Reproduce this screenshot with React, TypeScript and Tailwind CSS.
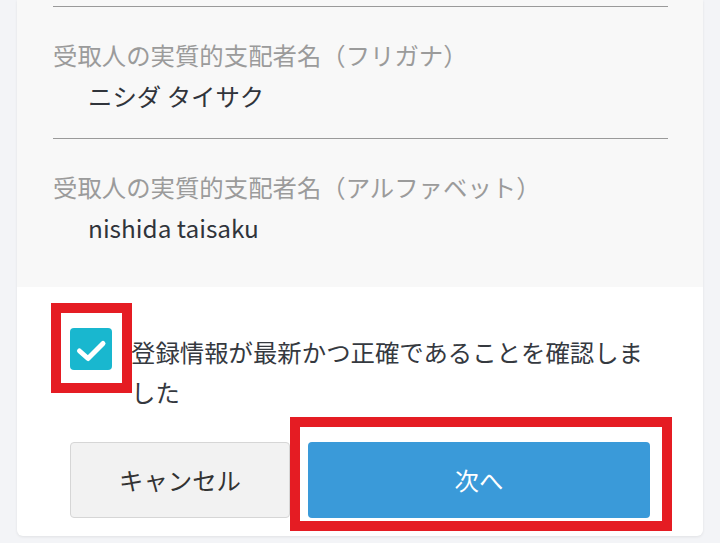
import React from "react";

const font = { fontFamily: '"Noto Sans CJK JP", "Noto Sans", sans-serif' };

function Item({ label, value, last }: { label: string; value: string; last?: boolean }) {
  return (
    <div className={`border-t border-[#9a9a9a] pt-[28px] ${last ? "pb-[38px]" : "pb-[21px]"}`}>
      <div className="text-[24.4px] leading-[40px] text-[#9b9b9b] whitespace-nowrap">{label}</div>
      <div className="pl-[35px] text-[24.4px] leading-[42px] text-[#30343b] whitespace-nowrap">{value}</div>
    </div>
  );
}

export default function App() {
  return (
    <div className="h-[543px] w-[720px] overflow-hidden bg-[#f3f4f7] px-[17px]" style={font}>
      <div className="overflow-hidden rounded-b-[6px] bg-white shadow-[0_1px_3px_rgba(0,0,0,0.08)]">
        <div className="bg-[#f8f8f8] pl-[36px] pr-[35px] pt-[6px]">
          <Item label="受取人の実質的支配者名（フリガナ）" value="ニシダ タイサク" />
          <Item label="受取人の実質的支配者名（アルファベット）" value="nishida taisaku" last />
        </div>
        <div className="px-[53px] pb-[18px] pt-[41px]">
          <div className="flex items-start gap-[19px]">
            <div className="relative h-[42px] w-[42px] shrink-0">
              <div className="h-[42px] w-[42px] rounded-[4px] bg-[#19b7cf]">
                <svg width="42" height="42" viewBox="0 0 42 42">
                  <polyline points="9.5,23 18,30.5 33,15.5" fill="none" stroke="white" strokeWidth="5" strokeLinecap="round" strokeLinejoin="round" />
                </svg>
              </div>
              <div className="pointer-events-none absolute -left-[19px] -right-[20px] -top-[25px] -bottom-[23px] border-[10px] border-[#e51c23]" />
            </div>
            <div className="mt-[4px] flex-1 text-[24.4px] leading-[40px] text-[#35393f]">
              登録情報が最新かつ正確であることを確認しました
            </div>
          </div>
          <div className="mt-[30px] flex gap-[18px]">
            <button className="flex h-[76px] w-[220px] items-center justify-center rounded-[4px] border border-[#d6d6d6] bg-[#f2f2f2] text-[24.4px] text-[#333]">
              キャンセル
            </button>
            <div className="relative flex-1">
              <button className="flex h-[76px] w-full items-center justify-center rounded-[4px] bg-[#3a9ad9] text-[24.4px] text-white">
                次へ
              </button>
              <div className="pointer-events-none absolute -left-[18px] -right-[22px] -top-[25px] -bottom-[13px] border-[10px] border-[#e51c23]" />
            </div>
          </div>
        </div>
      </div>
    </div>
  );
}
